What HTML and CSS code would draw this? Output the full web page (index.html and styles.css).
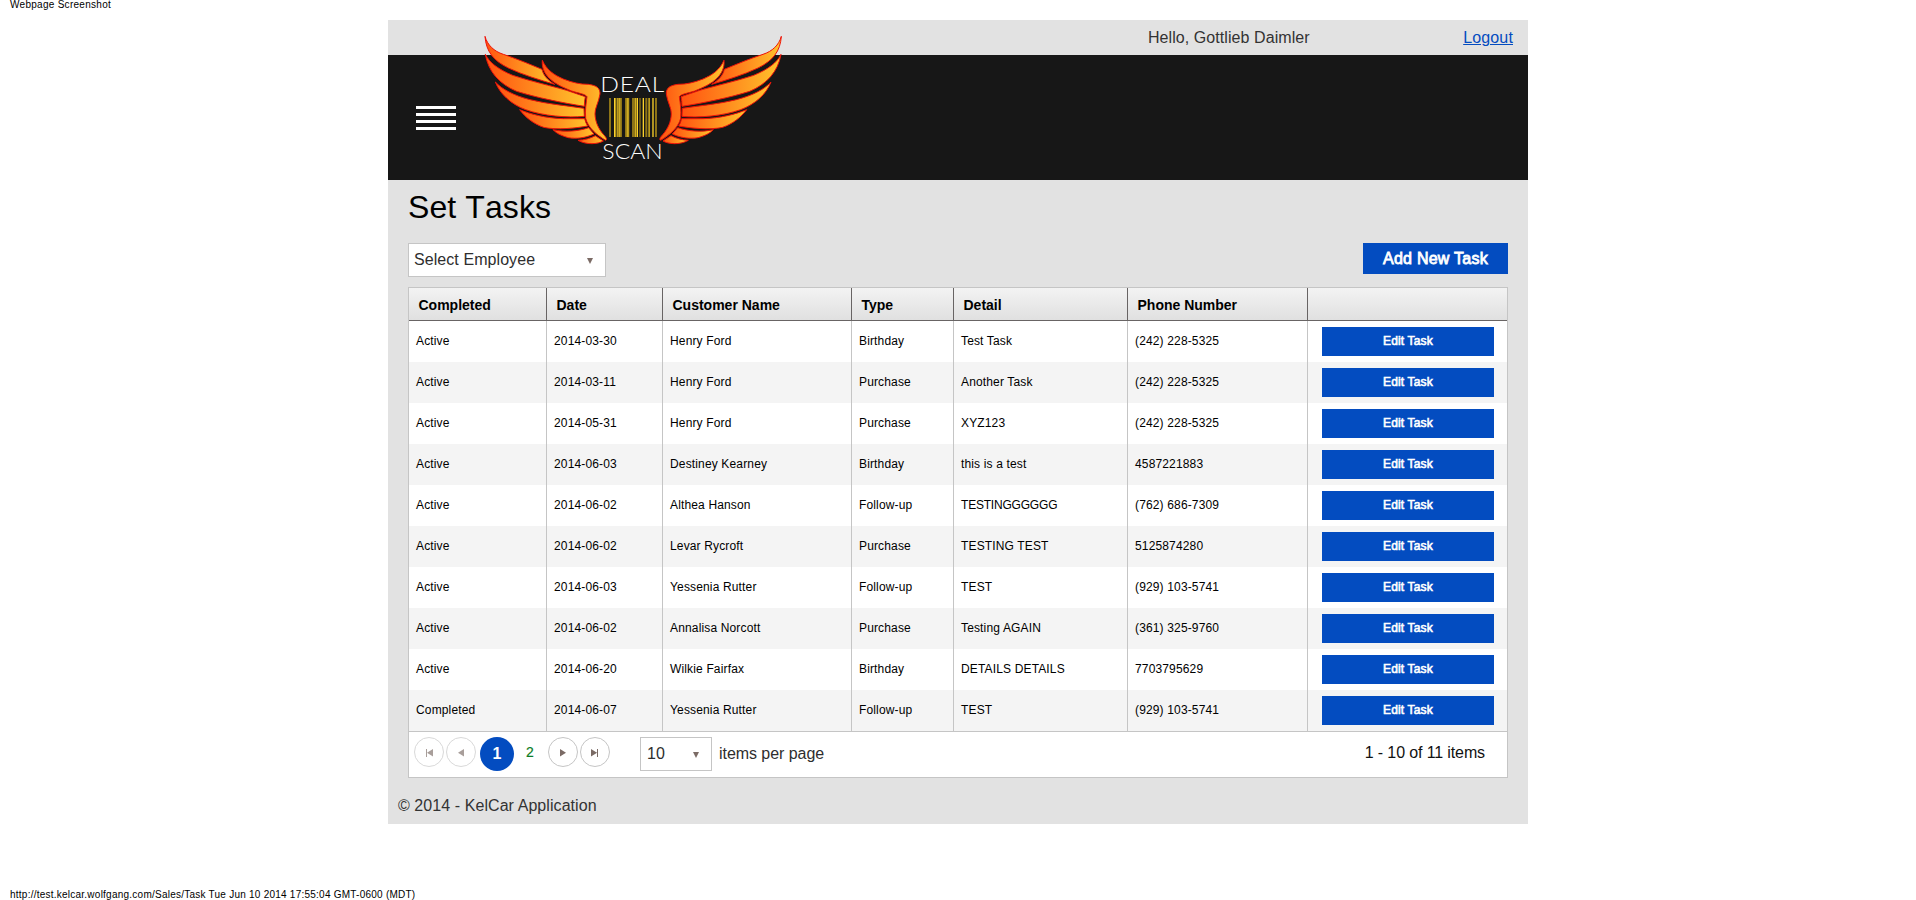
FILE: index.html
```html
<!DOCTYPE html>
<html lang="en">
<head>
<meta charset="utf-8">
<title>Set Tasks</title>
<link rel="stylesheet" href="styles.css">
</head>
<body>
<div class="print-title">Webpage Screenshot</div>
<div class="page">
  <div class="topbar"><span class="hello">Hello, Gottlieb Daimler</span><a class="logout" href="#">Logout</a></div>
  <header class="header">
    <div class="burger"><i></i><i></i><i></i><i></i></div>
    <svg class="logo" viewBox="0 0 920 405" width="306.667" height="135">
      <defs>
        <linearGradient id="ga"><stop offset="0" stop-color="#ff5210"/><stop offset="1" stop-color="#ffc42c"/></linearGradient>
        <linearGradient id="gb"><stop offset="0" stop-color="#ffc42c"/><stop offset="1" stop-color="#ff5210"/></linearGradient>
        <g id="wing" stroke="#ee1208" stroke-width="3" stroke-linejoin="round">
          <path d="M15 19C22 45 42 64 70 73C110 86 150 103 186 118C190 137 205 152 224 163C180 150 130 135 85 114C40 92 18 64 15 19Z"/>
          <path d="M16 73C28 98 55 118 98 136C150 153 215 168 260 181L316 200Q313 214 313 229C250 219 170 203 110 184C58 162 25 125 16 73Z"/>
          <path d="M46 156C66 178 100 196 150 209C200 222 262 227 312 235L313 259C262 264 190 258 137 239C92 222 60 192 46 156Z"/>
          <path d="M119 239C150 252 200 265 250 266L314 266Q317 279 323 288C290 294 230 301 191 292C160 281 136 262 119 239Z"/>
          <path d="M219 299C255 307 295 304 326 293L342 312C315 324 290 327 265 323C243 317 228 309 219 299Z"/>
          <path d="M294 331C313 330 332 325 346 317L370 333C355 342 320 346 294 331Z"/>
          <path d="M187 91C200 120 222 135 250 147C278 158 300 163 325 163C350 166 361 175 360 192C356 218 344 235 345 252C346 276 355 296 371 314C379 322 382 329 377 331C350 315 324 293 317 265C315 240 318 222 321 200C316 192 296 190 275 183C250 173 225 162 208 145C193 130 185 112 187 91Z"/>
        </g>
      </defs>
      <use href="#wing" fill="url(#ga)"/>
      <use href="#wing" fill="url(#gb)" transform="translate(919 0) scale(-1 1)"/>
      <path class="bar-dim" d="M387 204h6v117h-6zM405 204h5v117h-5zM411 204h15v117h-15zM435 204h13v117h-13zM456 204h18v117h-18zM478 204h4v117h-4zM496 204h6v117h-6zM504 204h6v117h-6zM525 204h6v117h-6z"/>
      <path class="bar-mid" d="M412 204h3v117h-3zM417 204h4v117h-4zM440 204h6v117h-6zM465 204h3v117h-3zM507 204h2v117h-2z"/>
      <path class="bar-lit" d="M402 204h4v117h-4zM471 204h3v117h-3zM488 204h4v117h-4zM517 204h4v117h-4z"/>
      <text class="logo-text" x="361" y="187" textLength="194" lengthAdjust="spacingAndGlyphs">DEAL</text>
      <text class="logo-text tight" x="367" y="388" textLength="181" lengthAdjust="spacingAndGlyphs">SCAN</text>
    </svg>
  </header>
  <main class="main">
    <h1 class="title">Set Tasks</h1>
    <div class="toolbar">
      <div class="select employee"><span>Select Employee</span><b class="caret"></b></div>
      <a class="add">Add New Task</a>
    </div>
    <div class="grid">
      <div class="row head"><div>Completed</div><div>Date</div><div>Customer Name</div><div>Type</div><div>Detail</div><div>Phone Number</div><div></div></div>
      <div class="row"><div>Active</div><div>2014-03-30</div><div>Henry Ford</div><div>Birthday</div><div>Test Task</div><div>(242) 228-5325</div><div><a class="edit">Edit Task</a></div></div>
      <div class="row"><div>Active</div><div>2014-03-11</div><div>Henry Ford</div><div>Purchase</div><div>Another Task</div><div>(242) 228-5325</div><div><a class="edit">Edit Task</a></div></div>
      <div class="row"><div>Active</div><div>2014-05-31</div><div>Henry Ford</div><div>Purchase</div><div>XYZ123</div><div>(242) 228-5325</div><div><a class="edit">Edit Task</a></div></div>
      <div class="row"><div>Active</div><div>2014-06-03</div><div>Destiney Kearney</div><div>Birthday</div><div>this is a test</div><div>4587221883</div><div><a class="edit">Edit Task</a></div></div>
      <div class="row"><div>Active</div><div>2014-06-02</div><div>Althea Hanson</div><div>Follow-up</div><div class="caps">TESTINGGGGGG</div><div>(762) 686-7309</div><div><a class="edit">Edit Task</a></div></div>
      <div class="row"><div>Active</div><div>2014-06-02</div><div>Levar Rycroft</div><div>Purchase</div><div>TESTING TEST</div><div>5125874280</div><div><a class="edit">Edit Task</a></div></div>
      <div class="row"><div>Active</div><div>2014-06-03</div><div>Yessenia Rutter</div><div>Follow-up</div><div>TEST</div><div>(929) 103-5741</div><div><a class="edit">Edit Task</a></div></div>
      <div class="row"><div>Active</div><div>2014-06-02</div><div>Annalisa Norcott</div><div>Purchase</div><div>Testing AGAIN</div><div>(361) 325-9760</div><div><a class="edit">Edit Task</a></div></div>
      <div class="row"><div>Active</div><div>2014-06-20</div><div>Wilkie Fairfax</div><div>Birthday</div><div>DETAILS DETAILS</div><div>7703795629</div><div><a class="edit">Edit Task</a></div></div>
      <div class="row"><div>Completed</div><div>2014-06-07</div><div>Yessenia Rutter</div><div>Follow-up</div><div>TEST</div><div>(929) 103-5741</div><div><a class="edit">Edit Task</a></div></div>
      <div class="pager">
        <a class="nav off"><svg width="30" height="30"><path d="M12 12h1v8h-1zM19 12v7.5l-6-3.75z"/></svg></a>
        <a class="nav off"><svg width="30" height="30"><path d="M18 12v7.5l-6-3.75z"/></svg></a>
        <span class="current">1</span>
        <a class="num">2</a>
        <a class="nav"><svg width="30" height="30"><path d="M12 12v7.5l6-3.75z"/></svg></a>
        <a class="nav"><svg width="30" height="30"><path d="M17 12h1v8h-1zM11 12v7.5l6-3.75z"/></svg></a>
        <div class="select size"><span>10</span><b class="caret"></b></div>
        <span class="per">items per page</span>
        <span class="info">1 - 10 of 11 items</span>
      </div>
    </div>
  </main>
  <footer class="footer">© 2014 - KelCar Application</footer>
</div>
<div class="print-url">http://test.kelcar.wolfgang.com/Sales/Task Tue Jun 10 2014 17:55:04 GMT-0600 (MDT)</div>
</body>
</html>
```
FILE: styles.css
```css
* { box-sizing: border-box; }
body { margin: 0; height: 900px; overflow: hidden; background: #fff; color: #000; font-family: "Liberation Sans", Arial, sans-serif; font-size: 16px; display: flex; flex-direction: column; align-items: center; }
.print-title, .print-url { flex: none; align-self: flex-start; padding-left: 10px; font-size: 10px; line-height: 12px; letter-spacing: .24px; white-space: nowrap; }
.print-title { height: 20px; margin-top: -1px; margin-bottom: 1px; letter-spacing: .28px; }
.print-url { margin-top: 65px; }
.page { width: 1140px; height: 804px; background: #e2e2e2; flex: none; }
.topbar { height: 35px; line-height: 35px; padding: 0 15px 0 760px; display: flex; justify-content: space-between; color: #333; }
.hello { letter-spacing: .07px; }
.logout { color: #034cc0; letter-spacing: .15px; }
.header { height: 125px; background: #171717; display: flex; }
.burger { width: 40px; margin: 51px 0 0 28px; display: flex; flex-direction: column; gap: 4px; }
.burger i { height: 3px; background: #fff; }
.logo { margin: -25px 0 0 24px; overflow: visible; }
.bar-dim { fill: #8d7417; }
.bar-mid { fill: #cfac22; }
.bar-lit { fill: #fbd22c; }
.logo-text { font-family: Lato, sans-serif; font-weight: 300; font-size: 64px; letter-spacing: 2px; fill: #fff; }
.logo-text.tight { letter-spacing: 0; }
.main { padding: 0 20px; }
.title { margin: 0; font-weight: 400; font-size: 32px; line-height: 54px; height: 63px; font-kerning: none; letter-spacing: .1px; }
.toolbar { height: 44px; display: flex; justify-content: space-between; align-items: flex-start; }
.select { background: #fff; border: 1px solid #c5c5c5; height: 34px; display: flex; align-items: center; justify-content: space-between; color: #2e2e2e; }
.employee { width: 198px; padding: 0 12px 0 5px; letter-spacing: .07px; }
.caret { border: solid transparent; border-width: 6px 3.5px 0; border-top-color: #7b6b65; margin-top: 2px; }
.add { width: 145px; height: 31px; line-height: 31px; background: #034cc0; color: #fff; text-align: center; letter-spacing: .25px; -webkit-text-stroke: .8px #fff; }
.grid { border: 1px solid #c5c5c5; background: #fff; }
.row { display: grid; grid-template-columns: 137px 116px 189px 102px 174px 180px 200px; height: 41px; font-size: 12px; line-height: 41px; }
.row > div { border-left: 1px solid #c5c5c5; padding-left: 7px; letter-spacing: .15px; white-space: nowrap; }
.row > div:first-child { border-left: 0; }
.row > .caps { letter-spacing: -.2px; }
.row:nth-child(odd) { background: #f4f4f4; }
.row.head { height: 33px; font-size: 14px; line-height: 34px; font-weight: 700; background: linear-gradient(#f3f3f3, #e0e0e0); border-bottom: 1px solid #686464; }
.row.head > div { padding-left: 9.5px; border-color: #686464; letter-spacing: 0; }
.row > div:last-child { padding: 6px 13px 0 14px; }
.edit { display: block; height: 29px; line-height: 28px; background: #034cc0; color: #fff; text-align: center; -webkit-text-stroke: .6px #fff; }
.pager { height: 46px; border-top: 1px solid #c5c5c5; padding: 5px 22px 0 5px; display: flex; align-items: flex-start; color: #2e2e2e; }
.nav { width: 30px; height: 30px; border: 1px solid #c5c5c5; border-radius: 50%; margin-right: 2px; }
.nav svg { display: block; margin: -1px; fill: #7b6b65; }
.off { opacity: .65; }
.current { width: 34px; height: 34px; border-radius: 50%; background: #034cc0; color: #fff; font-weight: 700; line-height: 33px; text-align: center; margin: 0 12px 0 2px; }
.num { color: #0b7d25; font-size: 14px; line-height: 31px; width: 22px; -webkit-text-stroke: .2px; }
.size { width: 72px; margin: 0 7px 0 28px; padding: 0 12px 0 6px; }
.per { line-height: 33px; letter-spacing: -.05px; }
.info { margin-left: auto; line-height: 32px; letter-spacing: -.12px; color: #111; }
.footer { padding: 19px 10px 0; line-height: 18px; letter-spacing: .07px; color: #333; }
```
